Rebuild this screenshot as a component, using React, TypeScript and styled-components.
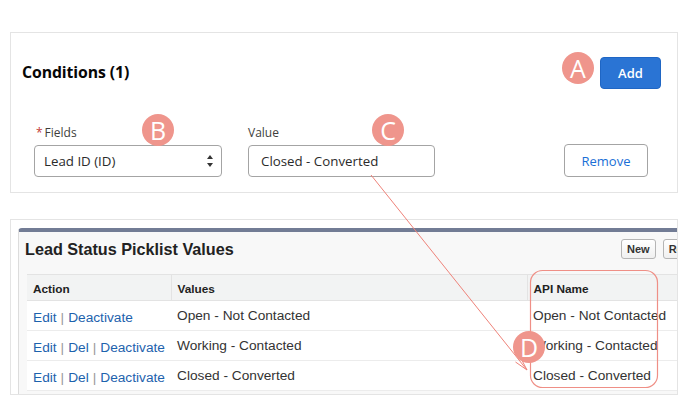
import React from "react";
import styled, { createGlobalStyle } from "styled-components";

const Global = createGlobalStyle`
  html, body { margin: 0; padding: 0; background: #ffffff; }
  body { font-family: "Open Sans", "Liberation Sans", sans-serif; }
  * { box-sizing: border-box; }
`;

const Page = styled.div`
  position: relative;
  width: 700px;
  height: 407px;
  padding: 32px 22px 0 10px;
  overflow: hidden;
`;

const ConditionsCard = styled.section`
  height: 161px;
  border: 1px solid #e4e4e4;
  padding: 24px 16px 15px 11px;
  display: flex;
  flex-direction: column;
`;

const CardHeader = styled.div`
  display: flex;
  align-items: center;
  justify-content: space-between;
  height: 32px;
`;

const CardTitle = styled.h2`
  margin: 0 0 3px 0;
  font-family: "Open Sans", sans-serif;
  font-weight: 700;
  font-size: 15.8px;
  color: #080707;
  letter-spacing: -0.1px;
`;

const BrandButton = styled.button`
  width: 61px;
  height: 32px;
  border: 1px solid #1f66c4;
  border-radius: 4px;
  background: #2a74d4;
  color: #ffffff;
  font-family: "Open Sans", sans-serif;
  font-weight: 600;
  font-size: 13px;
  padding: 0;
`;

const FieldRow = styled.div`
  display: flex;
  align-items: flex-end;
  margin: 36px 13px 0 12px;
  gap: 26px;
`;

const FieldGroup = styled.div<{ $w: number }>`
  display: flex;
  flex-direction: column;
  gap: 4px;
  width: ${(p) => p.$w}px;
`;

const FieldLabel = styled.label<{ $indent?: number }>`
  font-family: "Open Sans", sans-serif;
  font-size: 12px;
  line-height: 16px;
  color: #3e3e3c;
  padding-left: ${(p) => p.$indent ?? 0}px;
`;

const Required = styled.abbr`
  color: #c23934;
  text-decoration: none;
  margin-right: 2px;
`;

const InputBox = styled.div<{ $pad: number }>`
  height: 32px;
  border: 1px solid #a4a4a4;
  border-radius: 4px;
  background: #fff;
  display: flex;
  align-items: center;
  justify-content: space-between;
  padding: 0 7px 0 ${(p) => p.$pad}px;
  font-family: "Open Sans", sans-serif;
  font-size: 13.3px;
  color: #2b2b2b;
`;

const Spacer = styled.div`
  flex: 1;
`;

const NeutralButton = styled.button`
  width: 84px;
  height: 33px;
  border: 1px solid #a4a4a4;
  border-radius: 4px;
  background: #ffffff;
  color: #1a6fd6;
  font-family: "Open Sans", sans-serif;
  font-size: 13px;
  padding: 0;
`;

const ListCard = styled.section`
  margin-top: 26px;
  height: 176px;
  border: 1px solid #e4e4e4;
  padding: 8px 0 0 7px;
  overflow: hidden;
`;

const Panel = styled.div`
  width: 760px;
  height: 200px;
  background: #f8f8f8;
  border-top: 4px solid #727c95;
  border-left: 1px solid #dcdcdc;
  border-top-left-radius: 4px;
  padding: 7px 0 0 8px;
`;

const PanelHeader = styled.div`
  display: flex;
  align-items: center;
  height: 20px;
  margin-bottom: 15px;
`;

const PanelTitle = styled.h3`
  flex: 0 0 596px;
  margin: 0 0 0 -2px;
  font-family: "Liberation Sans", Arial, sans-serif;
  font-weight: 700;
  font-size: 16.2px;
  color: #222;
`;

const ClassicButton = styled.button`
  height: 20px;
  margin-right: 7px;
  padding: 0 5px;
  border: 1px solid #b5b5b5;
  border-radius: 3px;
  background: linear-gradient(#ffffff, #f0f0f0);
  font-family: "Liberation Sans", Arial, sans-serif;
  font-weight: 700;
  font-size: 11px;
  color: #333;
`;

const Table = styled.table`
  border-collapse: collapse;
  width: 720px;
  background: #fff;
  font-family: "Liberation Sans", Arial, sans-serif;
  font-size: 13.7px;
`;

const Th = styled.th<{ $w?: number }>`
  height: 26px;
  background: #f2f3f3;
  border-top: 1px solid #e3e3e3;
  border-bottom: 1px solid #e3e3e3;
  border-right: 1px solid #e3e3e3;
  text-align: left;
  padding: 2px 6px 0 6px;
  font-size: 11.8px;
  font-weight: 700;
  color: #222;
  width: ${(p) => (p.$w ? `${p.$w}px` : "auto")};
`;

const Td = styled.td`
  height: 30px;
  border-bottom: 1px solid #ececec;
  padding: 0 6px;
  color: #333;
  white-space: nowrap;
`;

const ActionTd = styled(Td)`
  padding: 3px 6px 0 6px;
`;

const Link = styled.a`
  color: #1d62ad;
  text-decoration: none;
`;

const Sep = styled.span`
  color: #999;
  margin: 0 4px;
`;

const Badge = styled.div<{ $x: number; $y: number }>`
  position: absolute;
  left: ${(p) => p.$x - 16}px;
  top: ${(p) => p.$y - 16}px;
  width: 32px;
  height: 32px;
  border-radius: 50%;
  background: #ef958c;
  color: #ffffff;
  display: flex;
  align-items: center;
  justify-content: center;
  font-family: "Open Sans", sans-serif;
  font-size: 25px;
  line-height: 1;
  padding-top: 1px;
`;

const Overlay = styled.svg`
  position: absolute;
  left: 0;
  top: 0;
  pointer-events: none;
`;

const SelectArrows = () => (
  <svg width="8" height="14" viewBox="0 0 8 14">
    <path d="M4 1 L7 5 L1 5 Z" fill="#333" />
    <path d="M4 13 L7 9 L1 9 Z" fill="#333" />
  </svg>
);

const rows = [
  { actions: ["Edit", "Deactivate"], value: "Open - Not Contacted" },
  { actions: ["Edit", "Del", "Deactivate"], value: "Working - Contacted" },
  { actions: ["Edit", "Del", "Deactivate"], value: "Closed - Converted" },
];

export default function App() {
  return (
    <>
      <Global />
      <Page>
        <ConditionsCard>
          <CardHeader>
            <CardTitle>Conditions (1)</CardTitle>
            <BrandButton>Add</BrandButton>
          </CardHeader>
          <FieldRow>
            <FieldGroup $w={188}>
              <FieldLabel $indent={2}>
                <Required>*</Required>Fields
              </FieldLabel>
              <InputBox $pad={9}>
                <span>Lead ID (ID)</span>
                <SelectArrows />
              </InputBox>
            </FieldGroup>
            <FieldGroup $w={187}>
              <FieldLabel>Value</FieldLabel>
              <InputBox $pad={12}>
                <span>Closed - Converted</span>
              </InputBox>
            </FieldGroup>
            <Spacer />
            <NeutralButton>Remove</NeutralButton>
          </FieldRow>
        </ConditionsCard>

        <ListCard>
          <Panel>
            <PanelHeader>
              <PanelTitle>Lead Status Picklist Values</PanelTitle>
              <ClassicButton>New</ClassicButton>
              <ClassicButton>Reorder</ClassicButton>
            </PanelHeader>
            <Table>
              <thead>
                <tr>
                  <Th $w={144}>Action</Th>
                  <Th $w={356}>Values</Th>
                  <Th>API Name</Th>
                </tr>
              </thead>
              <tbody>
                {rows.map((r) => (
                  <tr key={r.value}>
                    <ActionTd>
                      {r.actions.map((a, i) => (
                        <React.Fragment key={a}>
                          {i > 0 && <Sep>|</Sep>}
                          <Link href="#">{a}</Link>
                        </React.Fragment>
                      ))}
                    </ActionTd>
                    <Td>{r.value}</Td>
                    <Td>{r.value}</Td>
                  </tr>
                ))}
              </tbody>
            </Table>
          </Panel>
        </ListCard>

        <Overlay width="700" height="407" viewBox="0 0 700 407">
          <rect x="530.5" y="270.5" width="127" height="117" rx="12" fill="none" stroke="#ef8f86" strokeWidth="1.2" />
          <line x1="371" y1="175" x2="527" y2="370" stroke="#ee8279" strokeWidth="1" />
          <path d="M520.5 357.5 L527 370 L515.5 362" fill="none" stroke="#ee8279" strokeWidth="1" />
        </Overlay>
        <Badge $x={578} $y={68}>A</Badge>
        <Badge $x={158} $y={130}>B</Badge>
        <Badge $x={388} $y={130}>C</Badge>
        <Badge $x={529} $y={347}>D</Badge>
      </Page>
    </>
  );
}
